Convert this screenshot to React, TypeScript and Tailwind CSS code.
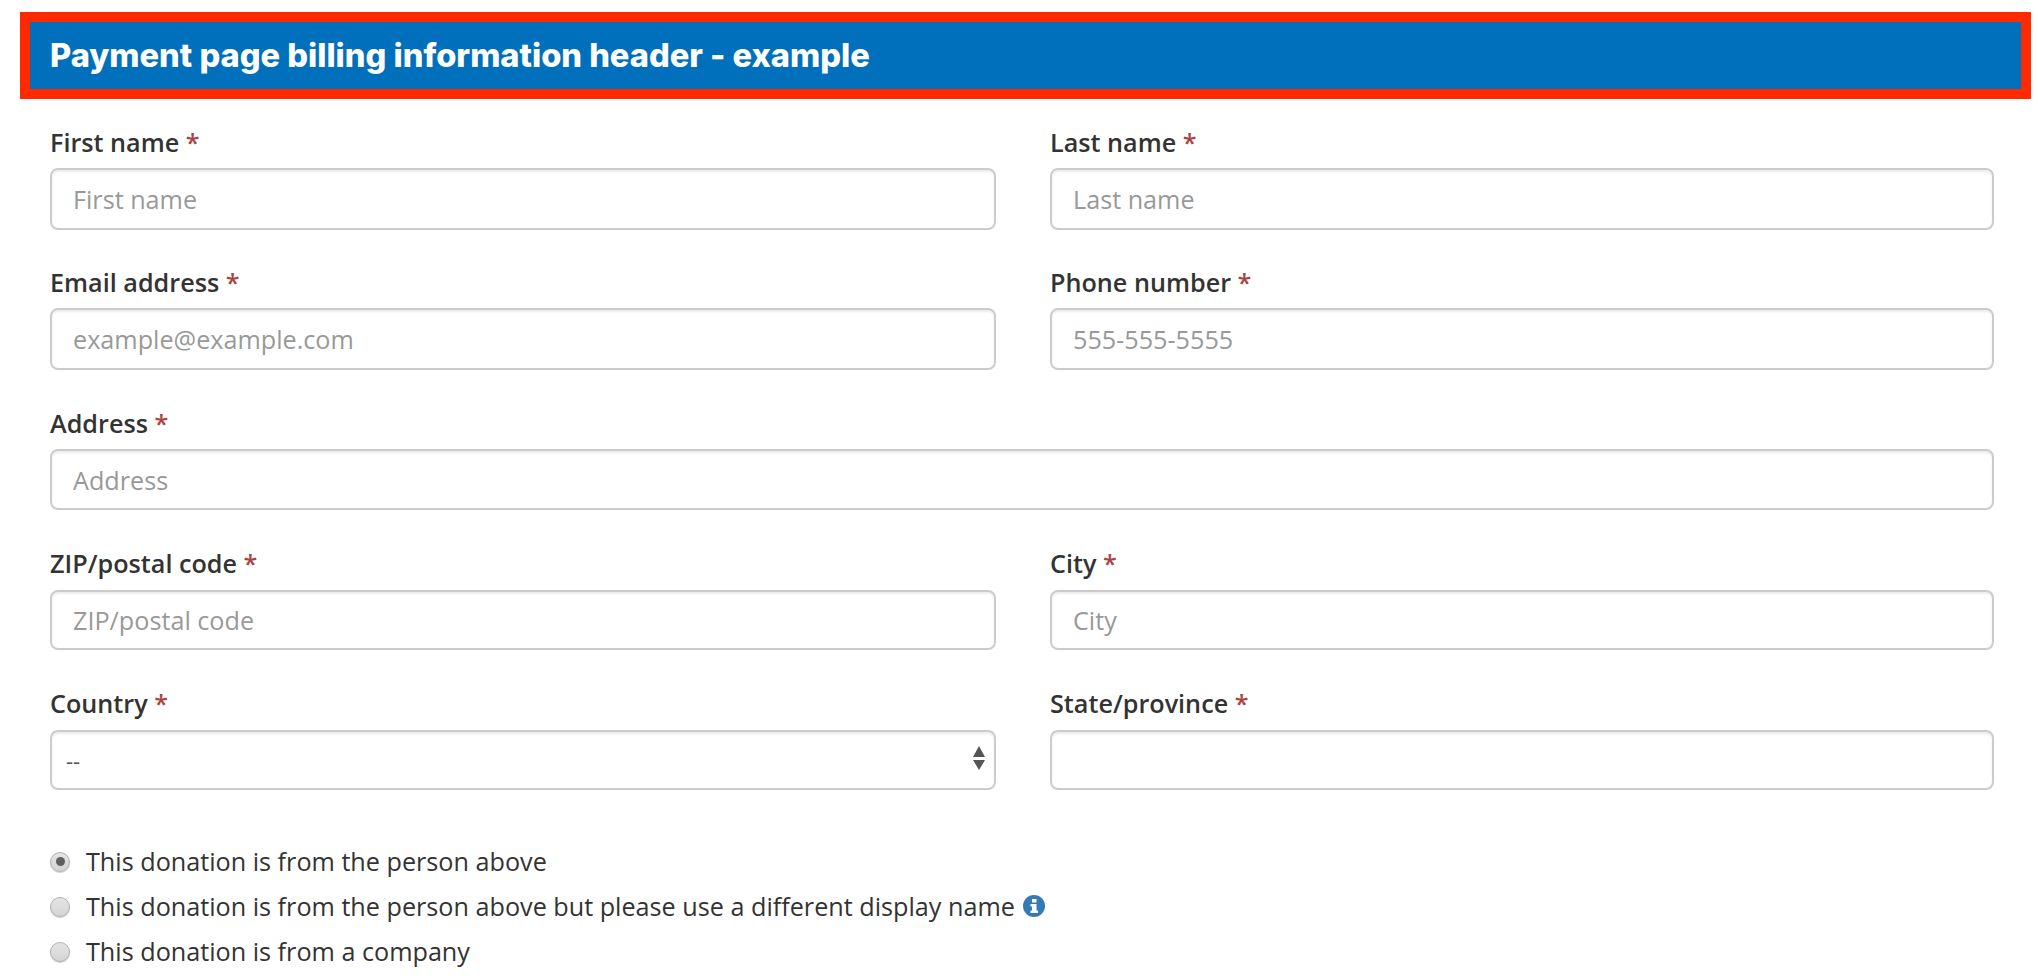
const inputBase = "block w-full rounded-[8px] border-2 border-[#cccccc] bg-white px-[21px] text-[25.2px] text-[#333333] shadow-[inset_0_2px_2px_rgba(0,0,0,0.075)] outline-none placeholder:text-[#999999]";
const labelCls = "block h-[30px] text-[25.2px] leading-[30px] font-semibold text-[#333333]";
const rowCls = "grid grid-cols-[946px_1fr] gap-x-[54px]";

function Label({ text, mb }: { text: string; mb: string }) {
  return (
    <label className={`${labelCls} ${mb}`}>
      {text} <span className="text-[#a94442]">*</span>
    </label>
  );
}

function Field({ label, placeholder, h = "h-[62px]", mb = "mb-[11px]" }: { label: string; placeholder?: string; h?: string; mb?: string }) {
  return (
    <div className="min-w-0">
      <Label text={label} mb={mb} />
      <input className={`${inputBase} ${h}`} placeholder={placeholder} readOnly />
    </div>
  );
}

function Radio({ checked, children }: { checked?: boolean; children: React.ReactNode }) {
  return (
    <div className="flex h-[45px] items-center gap-[16px] text-[25.2px] text-[#333333]">
      <span className="flex h-[20px] w-[20px] shrink-0 items-center justify-center rounded-full border border-[#b0b0b0] bg-gradient-to-b from-[#e4e4e4] to-[#d4d4d4] shadow-[0_1px_1px_rgba(0,0,0,0.2)]">
        {checked && <span className="h-[9px] w-[9px] rounded-full bg-[#5f5f5f]" />}
      </span>
      <span className="flex items-center gap-[8px]">{children}</span>
    </div>
  );
}

export default function App() {
  return (
    <div className="h-[980px] overflow-hidden bg-white pt-[12px] font-['Open_Sans',sans-serif]">
      <div className="ml-[20px] mr-[7px] border-[10px] border-[#ff2a00] bg-[#0070bc] pl-[20px] text-[32.6px] leading-[67px] font-extrabold text-white font-['Inter',sans-serif]">
        Payment page billing information header - example
      </div>
      <div className="pl-[50px] pr-[44px] pt-[28px]">
        <div className="flex flex-col gap-[37px]">
          <div className={rowCls}>
            <Field label="First name" placeholder="First name" />
            <Field label="Last name" placeholder="Last name" />
          </div>
          <div className={rowCls}>
            <Field label="Email address" placeholder="example@example.com" />
            <Field label="Phone number" placeholder="555-555-5555" />
          </div>
          <div className="mt-px">
            <Field label="Address" placeholder="Address" h="h-[61px]" />
          </div>
          <div className={`${rowCls} mt-px`}>
            <Field label="ZIP/postal code" placeholder="ZIP/postal code" h="h-[60px]" mb="mb-[12px]" />
            <Field label="City" placeholder="City" h="h-[60px]" mb="mb-[12px]" />
          </div>
          <div className={`${rowCls} mt-px`}>
            <div className="min-w-0">
              <Label text="Country" mb="mb-[12px]" />
              <div className="relative flex h-[60px] items-center rounded-[8px] border-2 border-[#cccccc] bg-white pl-[14px] text-[22px] text-[#555555] shadow-[inset_0_2px_2px_rgba(0,0,0,0.075)]">
                --
                <svg className="absolute right-[9px] top-[14px]" width="12" height="24" viewBox="0 0 12 24">
                  <path d="M6 0 L12 11 H0 Z M0 14 H12 L6 24 Z" fill="#555555" />
                </svg>
              </div>
            </div>
            <Field label="State/province" h="h-[60px]" mb="mb-[12px]" />
          </div>
        </div>
        <div className="mt-[49px]">
          <Radio checked>This donation is from the person above</Radio>
          <Radio>
            This donation is from the person above but please use a different display name
            <svg width="22" height="22" viewBox="0 0 22 22">
              <circle cx="11" cy="11" r="11" fill="#337ab7" />
              <rect x="9" y="4" width="4.5" height="3.5" fill="#fff" />
              <path d="M7.5 9 H13.5 V15.5 H15 V18 H7.5 V15.5 H9 V11.5 H7.5 Z" fill="#fff" />
            </svg>
          </Radio>
          <Radio>This donation is from a company</Radio>
        </div>
      </div>
    </div>
  );
}
